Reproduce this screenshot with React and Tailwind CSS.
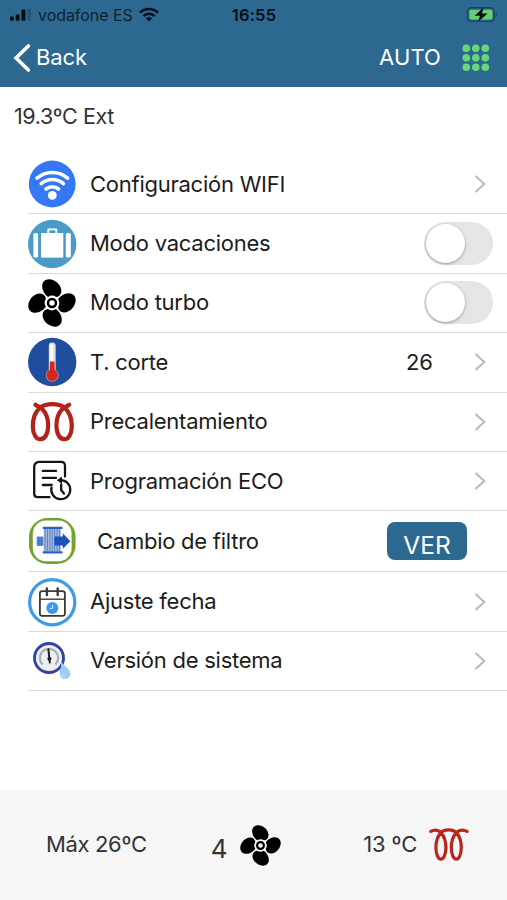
import React from "react";

const FanIcon = ({ className }) => (
  <svg viewBox="0 0 48 48" className={className}>
    {[0, 90, 180, 270].map((deg) => (
      <path
        key={deg}
        transform={`rotate(${deg} 24 24)`}
        d="M20.2 17.9C17.4 16 14.2 12 14.2 7.2C14.3 2.8 17 0.4 21 0.3C27.4 0.3 33.5 6.2 33.4 11.9C33.3 15.4 31.2 17.6 28.2 17.9A7.4 7.4 0 0 0 20.2 17.9Z"
      />
    ))}
    <circle cx="24" cy="24" r="4" fill="none" stroke="#000" strokeWidth="2.5" />
  </svg>
);

const WifiCircle = () => (
  <svg viewBox="0 0 48 48" className="w-12 h-12">
    <circle cx="24.2" cy="24" r="23.4" fill="#3478f6" />
    <g fill="none" stroke="#fff" strokeWidth="3.6" strokeLinecap="round">
      <path d="M9 18.2A23.5 23.5 0 0 1 39.6 18.2" />
      <path d="M13.2 23.6A17 17 0 0 1 35.4 23.6" />
      <path d="M18 29A10.2 10.2 0 0 1 30.6 29" />
    </g>
    <circle cx="24.3" cy="35.4" r="4.4" fill="#fff" />
  </svg>
);

const SuitcaseIcon = () => (
  <svg viewBox="0 0 48 48" className="w-12 h-12 overflow-visible">
    <circle cx="24.2" cy="24" r="24.2" fill="#4b9bc9" />
    <g fill="#fff">
      <rect x="5.4" y="13" width="4.7" height="24.6" rx="1.6" />
      <rect x="13" y="13" width="22.3" height="24.6" />
      <rect x="37.8" y="13" width="5" height="24.6" rx="1.6" />
    </g>
    <path d="M20.3 13.5V9.4H28.3V13.5" fill="none" stroke="#fff" strokeWidth="1.9" strokeLinejoin="round" />
  </svg>
);

const ThermoIcon = () => (
  <svg viewBox="0 0 48 48" className="w-12 h-12 overflow-visible">
    <circle cx="24.2" cy="24" r="24.2" fill="#1f4e9f" />
    <rect x="20.8" y="4.6" width="6.8" height="30" rx="3.4" fill="#dfe3ea" />
    <rect x="22.4" y="6" width="2.4" height="18" rx="1.2" fill="#fff" />
    <circle cx="24.2" cy="37.2" r="6.4" fill="#c9a0ad" />
    <circle cx="24.2" cy="37.2" r="5.8" fill="#d9261c" />
    <rect x="21.8" y="23.5" width="4.8" height="12" fill="#d9261c" />
  </svg>
);

const HeaterIcon = () => (
  <svg viewBox="0 0 48 48" className="w-12 h-12">
    <path
      d="M7.4 6.6C8.8 8.4 11.2 8.4 13.8 10.6C18 14.8 20.2 21 20.2 27.5C20.2 35.5 17 41.2 12.4 41.2C7.8 41.2 4.8 35.5 4.8 28C4.8 20 7.8 13.6 12 9.6C18 5 30.6 5 36.6 9.6C40.8 13.6 43.8 20 43.8 28C43.8 35.5 40.8 41.2 36.2 41.2C31.6 41.2 28.4 35.5 28.4 27.5C28.4 21 30.6 14.8 34.8 10.6C37.4 8.4 39.8 8.4 41.2 6.6"
      fill="none"
      stroke="#b3211b"
      strokeWidth="4.2"
      strokeLinecap="round"
    />
  </svg>
);

const CoilIcon = () => (
  <svg viewBox="0 0 40 34" className="w-10 h-[34px]">
    <path
      d="M1.8 3.4C5 1.6 8.8 1.6 11.9 4.6C15.2 8.2 16.9 13 16.9 19.5C16.9 26 14.6 31.2 11.9 31.2C9.2 31.2 6.9 26 6.9 19.5C6.9 13 8.6 8.2 11.9 4.6C15.5 1 23.7 1 27.3 4.6C30.6 8.2 32.3 13 32.3 19.5C32.3 26 30 31.2 27.3 31.2C24.6 31.2 22.3 26 22.3 19.5C22.3 13 24 8.2 27.3 4.6C30.4 1.6 34.6 1.6 38 3.4"
      fill="none"
      stroke="#b8261c"
      strokeWidth="3.2"
      strokeLinecap="round"
    />
  </svg>
);

const ProgramIcon = () => (
  <svg viewBox="0 0 48 48" className="w-12 h-12">
    <g fill="none" stroke="#151515" strokeWidth="2.3" strokeLinecap="round">
      <path d="M21.5 40.2H9.8Q6.2 40.2 6.2 36.8V9.4Q6.6 5.4 10.6 4.8H33Q37 4.8 37 8.8V19.5" strokeLinejoin="round" />
      <path d="M14.8 13.9H28M14.8 20.9H28M14.8 28H23.8" />
      <path d="M23.5 30.6A9.5 9.5 0 1 0 32.5 23.2" />
      <path d="M33.2 27.5V33L36 36.6" />
    </g>
    <path d="M28.8 23.2L34 19.4V27Z" fill="#151515" />
  </svg>
);

const FilterIcon = () => (
  <svg viewBox="0 0 48 48" className="w-12 h-12">
    <rect x="1" y="1" width="46.5" height="46" rx="18.5" fill="#74a22c" />
    <rect x="4.8" y="3.6" width="38.8" height="40.6" rx="13" fill="#fff" />
    <rect x="8.6" y="19.6" width="7" height="9.2" fill="#5b8fdc" />
    <path d="M10.8 19.6V28.8M13.3 19.6V28.8" stroke="#2759b5" strokeWidth="0.8" />
    <rect x="15.8" y="12" width="17" height="22.5" fill="#a9bde0" />
    <path
      d="M17 12V34M19.4 12V34M21.8 12V34M24.2 12V34M26.6 12V34M29 12V34M31.4 12V34"
      stroke="#5f86c8"
      strokeWidth="1.1"
    />
    <rect x="14.6" y="9.8" width="20" height="2.2" rx="0.8" fill="#2f62b8" />
    <rect x="14.6" y="34.2" width="20" height="2.4" rx="0.8" fill="#2f62b8" />
    <path d="M26.4 19.6H34.8V16.2L42.4 24.2L34.8 31.8V28.6H26.4Z" fill="#1d50bd" />
  </svg>
);

const DateIcon = () => (
  <svg viewBox="0 0 48 48" className="w-12 h-12 overflow-visible">
    <circle cx="24.2" cy="24.2" r="22.6" fill="#fff" stroke="#429ae2" strokeWidth="3.2" />
    <g fill="none" stroke="#3a3a3a" strokeWidth="1.8">
      <rect x="11.9" y="13.2" width="25" height="24.6" rx="2.4" />
      <path d="M11.9 21.2H36.9" strokeWidth="1.4" />
      <path d="M18.9 10.4V17M29.7 10.4V17" strokeWidth="2.4" strokeLinecap="round" />
    </g>
    <circle cx="24.3" cy="30" r="6" fill="#3b98ea" />
    <path d="M24.6 26.8V30.4H21.4" fill="none" stroke="#d4eafc" strokeWidth="1" />
  </svg>
);

const VersionIcon = () => (
  <svg viewBox="0 0 48 48" className="w-12 h-12">
    <circle cx="21" cy="21" r="14.5" fill="#edf0f2" stroke="#3542a5" strokeWidth="2.9" />
    <path
      d="M14.6 27.6A9.2 9.2 0 1 1 27.4 27.6"
      fill="none"
      stroke="#a9aeb3"
      strokeWidth="2.2"
    />
    <path d="M20.4 12.2L21.8 25.6" stroke="#222" strokeWidth="2" strokeLinecap="round" />
    <circle cx="21.4" cy="21.8" r="2" fill="#222" />
    <path
      d="M33.2 24.5C35.5 28.8 42.3 31.8 42.5 36.6C42.4 40 40 42 37.2 42C34.2 42 32 39.9 31.8 37C31.7 33.5 33.6 29.4 33.2 24.5Z"
      fill="#9dcdf3"
    />
    <path d="M34 37C34 38.8 35 39.8 36.6 40" fill="none" stroke="#e2f2fd" strokeWidth="1" />
  </svg>
);

const Chevron = () => (
  <svg viewBox="0 0 12 20" className="w-3 h-5 mr-[21px]">
    <path
      d="M1.5 2L10.3 10L1.5 18"
      fill="none"
      stroke="#bcbcbc"
      strokeWidth="2.2"
      strokeLinejoin="round"
    />
  </svg>
);

const Toggle = () => (
  <button className="w-[69px] h-[43px] mr-[14px] pl-0.5 rounded-full bg-[#e5e5e5] flex items-center">
    <span className="w-[39px] h-[39px] rounded-full bg-white shadow-[0_1px_3px_rgba(0,0,0,0.35)]" />
  </button>
);

const VerButton = () => (
  <button className="w-20 h-[38px] mr-10 pt-[7px] rounded-[8px] bg-[#2d6890] text-white text-[24.5px] leading-[32px]">
    VER
  </button>
);

const rows = [
  { label: "Configuración WIFI", icon: <WifiCircle />, right: <Chevron /> },
  { label: "Modo vacaciones", icon: <SuitcaseIcon />, right: <Toggle /> },
  { label: "Modo turbo", icon: <FanIcon className="w-12 h-12" />, right: <Toggle /> },
  { label: "T. corte", icon: <ThermoIcon />, value: "26", right: <Chevron /> },
  { label: "Precalentamiento", icon: <HeaterIcon />, right: <Chevron /> },
  { label: "Programación ECO", icon: <ProgramIcon />, right: <Chevron /> },
  { label: "Cambio de filtro", icon: <FilterIcon />, right: <VerButton />, wide: true },
  { label: "Ajuste fecha", icon: <DateIcon />, right: <Chevron /> },
  { label: "Versión de sistema", icon: <VersionIcon />, right: <Chevron /> },
];

const App = () => {
  return (
    <div className="w-full h-screen bg-white flex flex-col overflow-hidden font-['Inter',sans-serif] text-[#1c1c1c]">
      {/* Header */}
      <div className="w-full h-[87px] shrink-0 bg-[#2d6890]">
        <div className="h-[29px] grid grid-cols-3 items-center pl-[10px] pr-[9px] text-[#0d2233]">
          <div className="flex items-center">
            <svg viewBox="0 0 22 12" className="w-[22px] h-3 mt-px">
              <rect x="0" y="7.5" width="3.8" height="4.2" rx="1" fill="#061019" />
              <rect x="5.7" y="5.5" width="3.8" height="6.2" rx="1" fill="#061019" />
              <rect x="11.4" y="0.5" width="4" height="11.2" rx="1" fill="#061019" />
              <rect x="17.5" y="0" width="3.5" height="11.7" rx="1" fill="#255574" />
            </svg>
            <span className="ml-[6px] text-[16px] whitespace-nowrap tracking-[-0.05px]">
              vodafone ES
            </span>
            <svg viewBox="0 0 20 15" className="w-5 h-[15px] ml-[6px] shrink-0">
              <g fill="none" stroke="#061019" strokeWidth="2.6">
                <path d="M1 5.6A13 13 0 0 1 19 5.6" />
                <path d="M4.4 9.1A8 8 0 0 1 15.6 9.1" />
              </g>
              <path d="M6.9 11.3A4.6 4.6 0 0 1 13.1 11.3L10 14.6Z" fill="#061019" />
            </svg>
          </div>
          <span className="pt-px text-center text-[16.5px] font-semibold tracking-[0.2px] text-[#061019]">
            16:55
          </span>
          <svg viewBox="0 0 32 16" className="w-8 h-4 justify-self-end">
            <rect x="1.4" y="0.8" width="27" height="13.6" rx="4" fill="none" stroke="#1c435f" strokeWidth="1.4" />
            <path d="M30 5.6Q31.6 7.6 30 9.6Z" fill="#1c435f" />
            <rect x="3.4" y="2.8" width="23" height="9.6" rx="1.6" fill="#68cf70" />
            <path d="M17.6 0.2L8.6 8.8H14L12 15L21.6 6.4H16Z" fill="#061019" />
          </svg>
        </div>
        <div className="h-[57px] flex items-center pl-[13px] pr-[17px] text-white text-[22px]">
          <svg viewBox="0 0 18 30" className="w-[18px] h-[30px]">
            <path d="M15.4 3L3 15L15.4 27" fill="none" stroke="#fff" strokeWidth="3.6" strokeLinecap="round" />
          </svg>
          <span className="ml-[5px] tracking-[-0.1px]">Back</span>
          <span className="ml-auto mr-[21px] tracking-[0.1px]">AUTO</span>
          <svg viewBox="0 0 28 28" className="w-7 h-7" fill="#6bd57c">
            {[4.3, 13.8, 23.3].map((y) =>
              [4.3, 13.8, 23.3].map((x) => <circle key={`${x}-${y}`} cx={x} cy={y} r="3.8" />)
            )}
          </svg>
        </div>
      </div>

      {/* Outside temperature */}
      <div className="h-[68px] shrink-0 pl-[14px] pt-[14px] text-[21.5px] leading-[30px] tracking-[-0.4px] text-[#333]">
        19.3ºC Ext
      </div>

      {/* Settings list */}
      <div className="pl-7">
        {rows.map(({ label, icon, value, right, wide }) => (
          <div
            key={label}
            className={`flex items-center border-b border-[#d9d9d9] ${
              wide ? "h-[61px]" : "h-[59.4px]"
            }`}
          >
            {icon}
            <span
              className={`text-[22px] tracking-[-0.25px] ${wide ? "ml-[21px]" : "ml-[14px]"}`}
            >
              {label}
            </span>
            <div className="ml-auto flex items-center">
              {value && <span className="mr-[41px] text-[22px]">{value}</span>}
              {right}
            </div>
          </div>
        ))}
      </div>

      {/* Bottom status */}
      <div className="h-[110px] shrink-0 mt-auto bg-[#f6f6f6] flex items-center pl-[46px] pr-[38px] text-[#333]">
        <span className="pb-0.5 text-[22px] tracking-[-0.35px]">Máx 26ºC</span>
        <div className="ml-[64px] flex items-center">
          <span className="text-[26px] pt-1.5">4</span>
          <FanIcon className="w-[41px] h-[41px] ml-[13px]" />
        </div>
        <div className="ml-auto flex items-center">
          <span className="pb-0.5 text-[22px] tracking-[-0.2px]">13 ºC</span>
          <span className="ml-3">
            <CoilIcon />
          </span>
        </div>
      </div>
    </div>
  );
};

export default App;
